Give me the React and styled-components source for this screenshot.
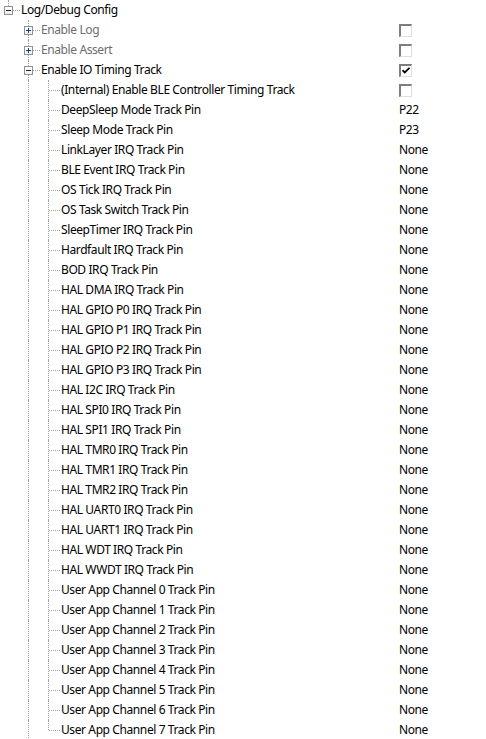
import React from "react";
import styled, { createGlobalStyle, css } from "styled-components";

const GlobalStyle = createGlobalStyle`
 html, body {
  margin: 0;
  padding: 0;
  background: #ffffff;
 }
 body {
  font-family: "Noto Sans", "Open Sans", sans-serif;
  font-size: 12px;
  letter-spacing: -0.4px;
  color: #000000;
 }
`;

const LINE = "#a0a0a0";

const Tree = styled.div`
 width: 486px;
 height: 739px;
 overflow: hidden;
 background: #ffffff;
`;

const Row = styled.div`
 display: grid;
 grid-template-columns: 399px 1fr;
 height: 20px;
 align-items: center;
`;

const LabelCell = styled.div`
 display: flex;
 align-items: stretch;
 height: 20px;
 min-width: 0;
`;

const Guide = styled.div`
 position: relative;
 flex: 0 0 20px;
 ${p =>
  p.$active &&
  css`
   &::before {
    content: "";
    position: absolute;
    left: 8px;
    top: 0;
    bottom: 0;
    border-left: 1px dotted ${LINE};
   }
  `}
`;

const Connector = styled.div`
 position: relative;
 flex: 0 0 20px;
 display: flex;
 align-items: center;
 padding-left: 4px;
 box-sizing: border-box;

 &::before {
  content: "";
  position: absolute;
  left: 8px;
  top: ${p => (p.$top ? "0" : "10px")};
  bottom: ${p => (p.$bottom ? "0" : "10px")};
  border-left: 1px dotted ${LINE};
 }
 &::after {
  content: "";
  position: absolute;
  left: 9px;
  right: 0;
  top: 10px;
  border-top: 1px dotted ${LINE};
 }
`;

const Expander = styled.span`
 position: relative;
 z-index: 1;
 width: 9px;
 height: 9px;
 box-sizing: border-box;
 border: 1px solid #919191;
 background: linear-gradient(#ffffff, #eeeeee);

 &::before {
  content: "";
  position: absolute;
  left: 1px;
  top: 3px;
  width: 5px;
  height: 1px;
  background: ${p => (p.$open ? "#1e1e1e" : "#1f3a78")};
 }
 ${p =>
  !p.$open &&
  css`
   &::after {
    content: "";
    position: absolute;
    left: 3px;
    top: 1px;
    width: 1px;
    height: 5px;
    background: #1f3a78;
   }
  `}
`;

const Label = styled.span`
 padding-left: 1px;
 line-height: 20px;
 white-space: nowrap;
 color: ${p => (p.$disabled ? "#6d6d6d" : "#000000")};
`;

const Value = styled.div`
 line-height: 20px;
 white-space: nowrap;
 display: flex;
 align-items: center;
`;

const CheckBox = styled.span`
 width: 13px;
 height: 13px;
 box-sizing: border-box;
 border-top: 2px solid #7d7d7d;
 border-left: 2px solid #7d7d7d;
 border-right: 1px solid #dedede;
 border-bottom: 1px solid #dedede;
 background: #ffffff;
 display: flex;
 align-items: center;
 justify-content: center;
`;

const CheckMark = () => (
 <svg width="8" height="7" viewBox="0 0 8 7">
  <path d="M0.5 3.2 L2.8 5.5 L7.5 0.8" stroke="#000" strokeWidth="1.8" fill="none" />
 </svg>
);

const pins = [
 "LinkLayer IRQ Track Pin",
 "BLE Event IRQ Track Pin",
 "OS Tick IRQ Track Pin",
 "OS Task Switch Track Pin",
 "SleepTimer IRQ Track Pin",
 "Hardfault IRQ Track Pin",
 "BOD IRQ Track Pin",
 "HAL DMA IRQ Track Pin",
 "HAL GPIO P0 IRQ Track Pin",
 "HAL GPIO P1 IRQ Track Pin",
 "HAL GPIO P2 IRQ Track Pin",
 "HAL GPIO P3 IRQ Track Pin",
 "HAL I2C IRQ Track Pin",
 "HAL SPI0 IRQ Track Pin",
 "HAL SPI1 IRQ Track Pin",
 "HAL TMR0 IRQ Track Pin",
 "HAL TMR1 IRQ Track Pin",
 "HAL TMR2 IRQ Track Pin",
 "HAL UART0 IRQ Track Pin",
 "HAL UART1 IRQ Track Pin",
 "HAL WDT IRQ Track Pin",
 "HAL WWDT IRQ Track Pin",
 "User App Channel 0 Track Pin",
 "User App Channel 1 Track Pin",
 "User App Channel 2 Track Pin",
 "User App Channel 3 Track Pin",
 "User App Channel 4 Track Pin",
 "User App Channel 5 Track Pin",
 "User App Channel 6 Track Pin",
 "User App Channel 7 Track Pin"
];

const children = [
 { label: "(Internal) Enable BLE Controller Timing Track", check: false },
 { label: "DeepSleep Mode Track Pin", text: "P22" },
 { label: "Sleep Mode Track Pin", text: "P23" },
 ...pins.map(label => ({ label, text: "None" }))
];

const rows = [
 { label: "Log/Debug Config", guides: [], box: "open", top: true, bottom: false },
 { label: "Enable Log", guides: [false], box: "closed", disabled: true, check: false, top: true, bottom: true },
 { label: "Enable Assert", guides: [false], box: "closed", disabled: true, check: false, top: true, bottom: true },
 { label: "Enable IO Timing Track", guides: [false], box: "open", check: true, top: true, bottom: true },
 ...children.map((c, i) => ({
  ...c,
  guides: [false, true],
  top: true,
  bottom: i < children.length - 1
 }))
];

const TreeRow = ({ row }) => (
 <Row>
  <LabelCell>
   {row.guides.map((g, i) => (
    <Guide key={i} $active={g} />
   ))}
   <Connector $top={row.top} $bottom={row.bottom}>
    {row.box && <Expander $open={row.box === "open"} />}
   </Connector>
   <Label $disabled={row.disabled}>{row.label}</Label>
  </LabelCell>
  <Value>
   {row.check !== undefined && <CheckBox>{row.check && <CheckMark />}</CheckBox>}
   {row.text}
  </Value>
 </Row>
);

export default function App() {
 return (
  <Tree>
   <GlobalStyle />
   {rows.map((row, i) => (
    <TreeRow key={i} row={row} />
   ))}
  </Tree>
 );
}
